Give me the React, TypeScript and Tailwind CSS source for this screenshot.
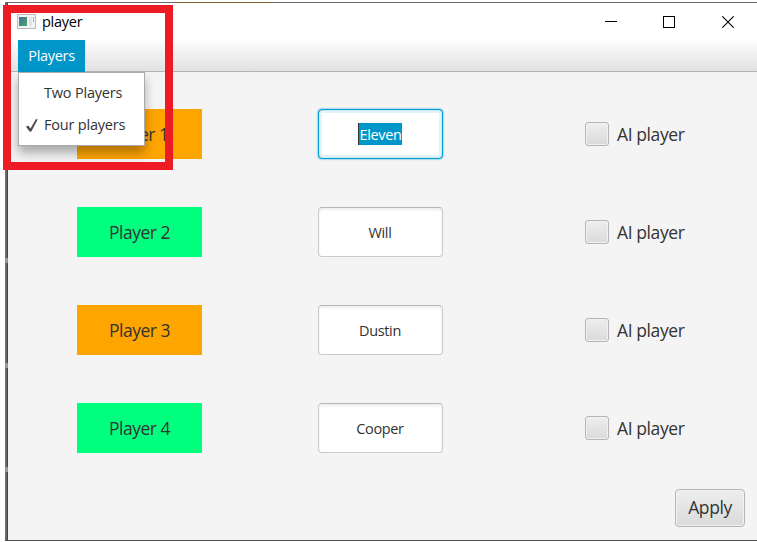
import React from "react";

const players = [
  { label: "Player 1", name: "Eleven", color: "bg-[#ffa500] pr-[3px]", focused: true },
  { label: "Player 2", name: "Will", color: "bg-[#00ff7f]", focused: false },
  { label: "Player 3", name: "Dustin", color: "bg-[#ffa500]", focused: false },
  { label: "Player 4", name: "Cooper", color: "bg-[#00ff7f]", focused: false },
];

function TitleBar() {
  return (
    <header className="flex h-[37px] shrink-0 items-center bg-white text-black">
      <svg className="ml-[9px] h-[15px] w-[19px] shrink-0" viewBox="0 0 19 15" shapeRendering="crispEdges">
        <defs>
          <linearGradient id="screen" x1="0" y1="0" x2="1" y2="1">
            <stop offset="0" stopColor="#436f9d" />
            <stop offset="1" stopColor="#48a765" />
          </linearGradient>
        </defs>
        <rect x="0.5" y="0.5" width="18" height="14" fill="#f4f4f4" stroke="#b7bbbf" />
        <rect x="2" y="3" width="8" height="9" fill="url(#screen)" />
        <rect x="12" y="3" width="3" height="9" fill="#e2e4e6" />
        <rect x="16" y="3" width="1" height="5" fill="#8fb9c0" />
      </svg>
      <span className="ml-[6px] text-[14.5px] leading-5 tracking-[-0.25px]">player</span>
      <div className="mr-[23px] ml-auto flex items-center gap-[46px]">
        <svg width="12" height="12" viewBox="0 0 12 12" shapeRendering="crispEdges">
          <path d="M0 5.5H12" stroke="black" />
        </svg>
        <svg width="12" height="12" viewBox="0 0 12 12" fill="none" shapeRendering="crispEdges">
          <rect x=".5" y=".5" width="11" height="11" stroke="black" />
        </svg>
        <svg className="ml-px" width="12" height="12" viewBox="0 0 12 12">
          <path d="M.3 .3L11.7 11.7M11.7 .3L.3 11.7" stroke="black" strokeWidth="1.1" />
        </svg>
      </div>
    </header>
  );
}

function MenuBar() {
  return (
    <nav className="relative z-10 flex h-8 shrink-0 border-b border-[#b5b5b5] bg-linear-to-b from-[#fdfdfd] to-[#e2e2e2] pl-[10px]">
      <div className="flex h-8 w-[67px] items-center justify-center bg-[#0096c9] text-[14.5px] tracking-[-0.3px] text-white">
        Players
      </div>
      <div className="absolute top-8 left-[10px] h-[74px] w-[127px] border border-[#aaaaaa] bg-white pt-1 text-[14.5px] text-[#333333] shadow-[0_7px_10px_rgba(0,0,0,0.3)]">
        <div className="flex h-8 items-center pl-[25px] tracking-[-0.2px]">Two Players</div>
        <div className="flex h-8 items-center pl-[7px] tracking-[-0.2px]">
          <svg className="mr-[6px] h-[13px] w-[12px] shrink-0" viewBox="0 0 12 13">
            <path d="M0 7.8L2.2 6.5L4.5 9.5L9.8 .3L11.8 .3L5.3 12.4H3.5Z" fill="#4d4d4d" />
          </svg>
          Four players
        </div>
      </div>
    </nav>
  );
}

function NameField({ name, focused }: { name: string; focused: boolean }) {
  return (
    <div
      className={
        focused
          ? "ml-[116px] flex h-[50px] w-[125px] items-center justify-center rounded-[4px] border border-[#039ed3] bg-white text-[14.5px] shadow-[0_0_2px_#039ed3,inset_0_0_1px_#039ed3,inset_0_0_0_3px_#e2f2f8]"
          : "ml-[116px] flex h-[50px] w-[125px] items-center justify-center rounded-[4px] border border-[#cbcbcb] border-t-[#b5b5b5] bg-white pt-px pr-px text-[14.5px] shadow-[inset_0_2px_3px_#eeeeee]"
      }
    >
      {focused ? (
        <span className="mr-px flex h-[22px] items-center border-l border-[#333333] bg-[#0096c9] pt-px tracking-[-0.35px] text-white">
          {name}
        </span>
      ) : (
        <span className="tracking-[-0.35px] text-[#323232]">{name}</span>
      )}
    </div>
  );
}

export default function App() {
  return (
    <div className="relative h-[542px] w-[757px] overflow-hidden bg-white pt-[2px] pl-[5px] font-['Open_Sans','Noto_Sans',sans-serif]">
      <div className="flex h-[539px] flex-col border-t border-b border-t-[#6b6b6b] border-b-[#4d4d4d] bg-linear-to-r from-[#6b6b6b] from-[2px] to-[#444444] to-[2px] pl-[3px]">
        <TitleBar />
        <MenuBar />
        <main className="flex grow flex-col bg-[#f4f4f4] pt-[37px]">
          <div className="flex flex-col gap-12">
            {players.map((player) => (
              <div key={player.label} className="flex h-[50px] items-center pl-[69px] text-[17.5px] text-[#333333]">
                <div className={`flex h-[50px] w-[125px] items-center justify-center pt-px tracking-[-0.5px] ${player.color}`}>
                  {player.label}
                </div>
                <NameField name={player.name} focused={player.focused} />
                <div className="ml-[142px] h-6 w-6 rounded-[3px] border border-[#b5b5b5] bg-linear-to-b from-[#eeeeee] to-[#dadada] shadow-[inset_0_0_0_1px_#f1f1f1]" />
                <span className="ml-2 pt-px tracking-[-0.4px]">AI player</span>
              </div>
            ))}
          </div>
          <button className="mt-9 mr-3 flex h-[38px] w-[70px] items-center justify-center self-end rounded-[4px] border border-[#b5b5b5] bg-linear-to-b from-[#eeeeee] to-[#dadada] pb-px text-[17.5px] tracking-[-0.4px] text-[#333333] shadow-[inset_0_0_0_1px_#f3f3f3]">
            Apply
          </button>
        </main>
      </div>
      <div className="absolute top-0 left-[174px] h-[3px] w-[100px] border-b border-[#80612f] bg-white" />
      <div className="absolute top-[258px] left-[5px] h-[5px] w-[3px] bg-[#969696]" />
      <div className="absolute top-[363px] left-[5px] h-[5px] w-[3px] bg-[#969696]" />
      <div className="absolute top-[467px] left-[5px] h-[5px] w-[3px] bg-[#969696]" />
      <div className="pointer-events-none absolute top-[5px] left-[3px] z-20 h-[165px] w-[170px] border-8 border-[#ed1c24]" />
    </div>
  );
}
